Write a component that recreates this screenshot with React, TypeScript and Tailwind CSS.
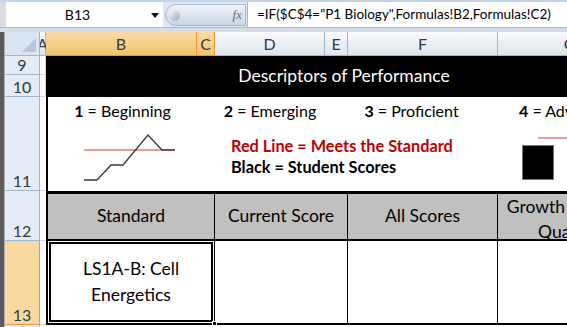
import React from "react";

const font = { fontFamily: "Lato, 'Open Sans', sans-serif" };

function ColHead({ label, selected }: { label: string; selected?: boolean }) {
  return (
    <div
      className={
        selected
          ? "flex items-center justify-center border-r border-b border-[#f29536] bg-gradient-to-b from-[#f9dba3] to-[#f2c56c] text-[16px] text-[#303a48]"
          : "flex items-center justify-center border-r border-b border-[#9eb6ce] bg-gradient-to-b from-[#f9fbfd] to-[#dde5ef] text-[16px] text-[#303a48]"
      }
    >
      {label}
    </div>
  );
}

function RowHead({ label, selected }: { label: string; selected?: boolean }) {
  return (
    <div
      className={
        selected
          ? "col-start-1 flex items-end justify-center border-r border-b border-[#f29536] bg-[#f9d99f] pb-[1px] text-[16px] leading-none text-[#303a48]"
          : "col-start-1 flex items-end justify-center border-r border-b border-[#9eb6ce] bg-[#e4ecf7] pb-[1px] text-[16px] leading-none text-[#303a48]"
      }
    >
      {label}
    </div>
  );
}

export default function App() {
  return (
    <div className="w-[567px] h-[327px] overflow-hidden bg-white" style={font}>
      {/* ribbon bottom edge */}
      <div className="h-[2px] bg-[#c4d5ea]" />

      {/* formula bar */}
      <div className="flex h-[26px] border-b border-[#a9b8cc] bg-[#dfe7f1]">
        <div className="w-[6px] shrink-0 bg-[#d9dee5]" />
        <div className="relative flex w-[157px] shrink-0 items-center justify-center bg-white pr-[14px] text-[14px] text-black">
          B13
          <svg className="absolute right-[4px] top-[11px]" width="8" height="5" viewBox="0 0 8 5">
            <path d="M0 0 H8 L4 5 Z" fill="#111" />
          </svg>
        </div>
        <div className="ml-[2px] mt-[2px] flex h-[22px] w-[81px] shrink-0 items-center justify-between rounded-l-full border border-[#a7b9d2] bg-gradient-to-b from-[#f0f4fa] to-[#c9d6e8] pl-[3px] pr-[3px]">
          <div className="h-[11px] w-[11px] rounded-full bg-gradient-to-br from-[#fdfdfd] to-[#9ca6b2]" />
          <span className="text-[13px] italic text-[#6b6b6b]" style={{ fontFamily: "'Liberation Serif', serif" }}>
            fx
          </span>
        </div>
        <div className="ml-[1px] flex min-w-0 flex-1 items-center overflow-hidden border-l border-[#a9b8cc] bg-white pl-[9px] text-[13.5px] text-black whitespace-nowrap">
          =IF($C$4="P1 Biology",Formulas!B2,Formulas!C2)
        </div>
      </div>
      <div className="h-[4px] bg-[#d5deea]" />

      <div className="flex">
        <div className="w-[4px] shrink-0 bg-[#5a5a5a]" />
        <div className="w-[1px] shrink-0 bg-[#b0b0b0]" />
        <div className="grid shrink-0 grid-cols-[35px_6px_151px_18px_110px_23px_150px_144px] grid-rows-[24px_19px_22px_94px_50px_84px_20px]">
          {/* header row */}
          <div className="relative border-r border-b border-[#9eb6ce] bg-[#dbe5f1]">
            <svg className="absolute bottom-[3px] right-[3px]" width="14" height="14" viewBox="0 0 14 14">
              <path d="M14 0 V14 H0 Z" fill="#b7c8dc" />
            </svg>
          </div>
          <ColHead label="A" />
          <ColHead label="B" selected />
          <ColHead label="C" selected />
          <ColHead label="D" />
          <ColHead label="E" />
          <ColHead label="F" />
          <ColHead label="G" />

          {/* row headers */}
          <RowHead label="9" />
          <RowHead label="10" />
          <RowHead label="11" />
          <RowHead label="12" />
          <RowHead label="13" selected />
          <RowHead label="14" />

          {/* column A */}
          <div className="col-start-2 row-start-2 border-r border-b border-[#d0d7e5]" />
          <div className="col-start-2 row-start-3 border-r border-b border-[#d0d7e5]" />
          <div className="col-start-2 row-start-4 border-b border-[#d0d7e5]" />
          <div className="col-start-2 row-start-5 border-b border-[#d0d7e5]" />
          <div className="col-start-2 row-start-6 border-b border-[#d0d7e5]" />
          <div className="col-start-2 row-start-7 border-b border-[#d0d7e5]" />

          {/* title */}
          <div className="col-start-3 col-span-6 row-start-2 row-span-2 flex items-center justify-center bg-black text-[17.5px] text-white">
            Descriptors of Performance
          </div>

          {/* row 11: legend */}
          <div className="col-start-3 row-start-4 flex flex-col items-center border-l-2 border-black pt-[2px] text-[16px] text-black">
            <div>
              <b>1</b> = Beginning
            </div>
            <svg className="mt-[10px] self-start" width="151" height="52" viewBox="0 0 151 52">
              <line x1="36" y1="17" x2="127" y2="17" stroke="#e49c9c" strokeWidth="2" />
              <polyline
                points="36,47 49,47 63,32 75,32 100,2 114,17 127,17"
                fill="none"
                stroke="#3c3c3c"
                strokeWidth="1.4"
              />
            </svg>
          </div>
          <div className="col-start-5 col-span-3 row-start-4 flex flex-col text-black">
            <div className="grid grid-cols-[110px_1fr] pt-[2px] text-[16px]">
              <div className="text-center">
                <b>2</b> = Emerging
              </div>
              <div className="text-center">
                <b>3</b> = Proficient
              </div>
            </div>
            <div className="mt-[12px] pl-[16px] text-[16.3px] font-bold leading-[21px]">
              <div className="text-[#c00000]">Red Line = Meets the Standard</div>
              <div>Black = Student Scores</div>
            </div>
          </div>
          <div className="col-start-8 row-start-4 flex flex-col pt-[2px] text-[16px] text-black">
            <div className="pl-[21px] whitespace-nowrap">
              <b>4</b> = Advanced
            </div>
            <svg className="mt-[14px]" width="144" height="44" viewBox="0 0 144 44">
              <line x1="40" y1="1" x2="144" y2="1" stroke="#e49c9c" strokeWidth="2" />
              <rect x="24.5" y="8.5" width="31" height="34" fill="#000" stroke="#777" strokeWidth="1" />
            </svg>
          </div>

          {/* row 12: table header */}
          <div className="col-start-3 col-span-2 row-start-5 flex items-center justify-center border-l-2 border-t-[3px] border-r border-b-2 border-black bg-[#c0c0c0] text-[17.5px] text-black">
            Standard
          </div>
          <div className="col-start-5 col-span-2 row-start-5 flex items-center justify-center border-t-[3px] border-r border-b-2 border-black bg-[#c0c0c0] text-[17.5px] text-black">
            Current Score
          </div>
          <div className="col-start-7 row-start-5 flex items-center justify-center border-t-[3px] border-r border-b-2 border-black bg-[#c0c0c0] text-[17.5px] text-black">
            All Scores
          </div>
          <div className="col-start-8 row-start-5 border-t-[3px] border-b-2 border-black bg-[#c0c0c0] text-[17.5px] leading-[25px] text-black">
            <div className="flex w-[136px] flex-col items-center whitespace-nowrap">
              <div>Growth Toward</div>
              <div>Quality</div>
            </div>
          </div>

          {/* row 13 */}
          <div className="relative col-start-3 col-span-2 row-start-6 flex flex-col items-center justify-center border-l-2 border-r border-b-2 border-black text-[17.5px] leading-[26px] text-black">
            <div className="absolute inset-[1px] border-2 border-black shadow-[inset_0_0_0_1px_white]" />
            <div>LS1A-B: Cell</div>
            <div>Energetics</div>
            <div className="absolute -bottom-[3px] -right-[3px] h-[5px] w-[5px] border border-white bg-black" />
          </div>
          <div className="col-start-5 col-span-2 row-start-6 border-r border-b-2 border-black" />
          <div className="col-start-7 row-start-6 border-r border-b-2 border-black" />
          <div className="col-start-8 row-start-6 border-b-2 border-black" />
        </div>
      </div>
    </div>
  );
}
